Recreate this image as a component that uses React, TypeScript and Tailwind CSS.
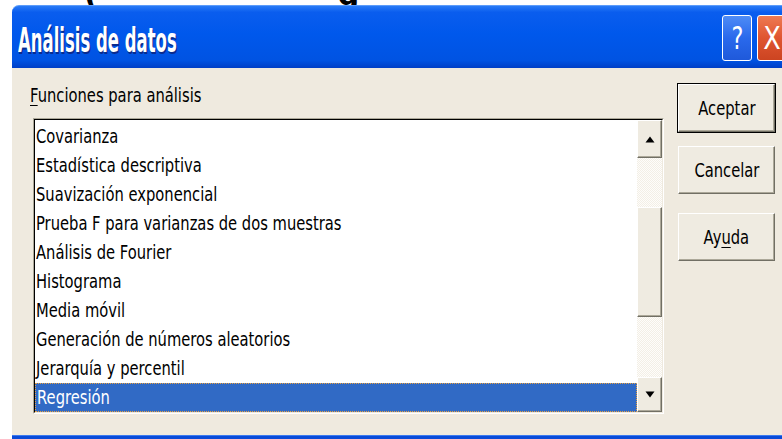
import type { ReactNode } from 'react'

const funciones = [
  'Covarianza',
  'Estadística descriptiva',
  'Suavización exponencial',
  'Prueba F para varianzas de dos muestras',
  'Análisis de Fourier',
  'Histograma',
  'Media móvil',
  'Generación de números aleatorios',
  'Jerarquía y percentil',
  'Regresión',
]

// Tahoma-like narrow text: DejaVu Sans squeezed horizontally
function Narrow({ children, className = '' }: { children: ReactNode; className?: string }) {
  return (
    <span className={`inline-block origin-left scale-x-[0.775] whitespace-nowrap ${className}`}>
      {children}
    </span>
  )
}

function Arrow({ up }: { up?: boolean }) {
  return (
    <svg width="10" height="7" viewBox="0 0 10 7">
      {up ? <path d="M5 0.5 L9.5 6.5 L0.5 6.5 Z" fill="#000" /> : <path d="M0.5 0.5 L9.5 0.5 L5 6.5 Z" fill="#000" />}
    </svg>
  )
}

const bevel =
  'bg-[#EFEBE1] border-t border-l border-t-[#FFFFFF] border-l-[#FFFFFF] border-b border-r border-b-[#716F64] border-r-[#716F64] shadow-[inset_-1px_-1px_0_#ACA899]'

const track = 'bg-[repeating-conic-gradient(#F3EFE6_0_25%,#FEFDFB_0_50%)] bg-[length:2px_2px]'

function DialogButton({ children, isDefault }: { children: ReactNode; isDefault?: boolean }) {
  return (
    <div className={isDefault ? 'border border-black' : 'border border-transparent'}>
      <div className={`flex h-[48px] w-[97px] items-center justify-center text-[19px] text-black ${bevel}`}>
        <span className="inline-block scale-x-[0.775] whitespace-nowrap">{children}</span>
      </div>
    </div>
  )
}

export default function App() {
  return (
    <div className="flex h-[439px] w-[782px] flex-col overflow-hidden bg-white font-['DejaVu_Sans',sans-serif]">
      {/* cropped caption above the window */}
      <div className="h-[5px] overflow-hidden">
        <div className="-mt-[30px] flex h-[40px] items-end text-[30px] font-bold leading-none text-black">
          <span className="ml-[84px]">(</span>
          <span className="ml-[240px]">g</span>
        </div>
      </div>

      <div className="flex flex-1 pl-[12px]">
        <div className="flex w-[778px] shrink-0 flex-col">
          {/* title bar */}
          <div className="flex h-[63px] items-center justify-between rounded-tl-[7px] border-t border-t-[#5C9CFA] bg-[linear-gradient(180deg,#2A7BF6_0%,#0A5DEE_10%,#0058EC_45%,#0053E2_88%,#003FC6_100%)] pl-[6px] pr-[3px]">
            <span className="mt-[7px] inline-block origin-left scale-x-[0.5] whitespace-nowrap text-[33px] font-bold text-white [text-shadow:2px_2px_0_#0A2B8E]">
              Análisis de datos
            </span>
            <div className="flex gap-[5px] pt-[2px]">
              <div className="flex h-[46px] w-[30px] items-center justify-center rounded-[3px] border border-white bg-[linear-gradient(180deg,#4E8CF6_0%,#2A69EC_50%,#1F59DA_100%)]">
                <span className="inline-block scale-x-[0.7] text-[32px] leading-none text-white">?</span>
              </div>
              <div className="flex h-[46px] w-[30px] items-center justify-center rounded-[3px] border border-white bg-[linear-gradient(180deg,#EE7A52_0%,#DF5530_50%,#CC4421_100%)]">
                <span className="inline-block scale-x-[0.8] text-[32px] leading-none text-white">X</span>
              </div>
            </div>
          </div>

          {/* dialog body */}
          <div className="flex flex-1 bg-[#EFEADF] pt-[15px]">
            <div className="flex flex-col">
              <div className="h-[35px] pl-[18px] text-[19px] leading-[24px] text-black">
                <Narrow>
                  <span className="underline underline-offset-[3px]">F</span>unciones para análisis
                </Narrow>
              </div>

              <div className="ml-[21px] border-l border-t border-b border-r border-l-[#ACA899] border-t-[#ACA899] border-b-white border-r-white">
                <div className="flex h-[294px] w-[629px] border border-l-black border-t-black border-b-[#EFEADF] border-r-[#EFEADF] bg-white">
                  <div className="flex-1 pt-[2px]">
                    {funciones.map((f) => {
                      const selected = f === 'Regresión'
                      return (
                        <div
                          key={f}
                          className={`flex h-[29px] items-center overflow-hidden pl-[1px] text-[19px] ${
                            selected
                              ? 'border border-dotted border-[#E8A040] bg-[#316AC5] text-white'
                              : 'text-black'
                          }`}
                        >
                          <Narrow>{f}</Narrow>
                        </div>
                      )
                    })}
                  </div>

                  {/* vertical scrollbar */}
                  <div className="flex w-[25px] flex-col">
                    <div className={`flex h-[38px] items-center justify-center ${bevel}`}>
                      <Arrow up />
                    </div>
                    <div className={`h-[49px] ${track}`} />
                    <div className={`h-[110px] ${bevel}`} />
                    <div className={`h-[60px] ${track}`} />
                    <div className={`flex h-[35px] items-center justify-center ${bevel}`}>
                      <Arrow />
                    </div>
                  </div>
                </div>
              </div>
            </div>

            <div className="ml-[13px] flex flex-col">
              <DialogButton isDefault>Aceptar</DialogButton>
              <div className="mt-[12px]">
                <DialogButton>Cancelar</DialogButton>
              </div>
              <div className="mt-[17px]">
                <DialogButton>
                  Ay<span className="underline underline-offset-[3px]">u</span>da
                </DialogButton>
              </div>
            </div>
          </div>

          {/* window frame bottom edge */}
          <div className="h-[4px] border-t border-t-[#3B7AF0] bg-[#0A4BD8]" />
        </div>
      </div>
    </div>
  )
}
